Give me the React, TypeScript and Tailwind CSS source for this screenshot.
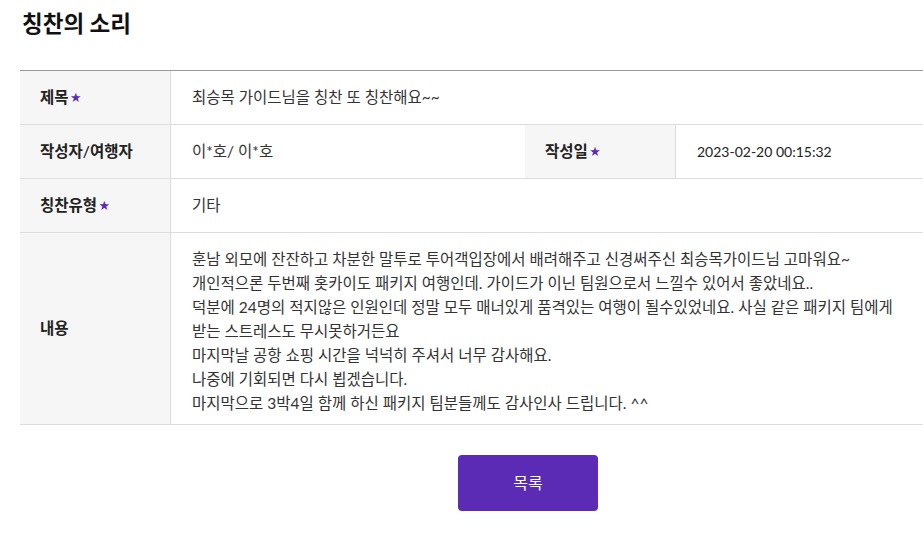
import React from 'react';

const lines = [
  '훈남 외모에 잔잔하고 차분한 말투로 투어객입장에서 배려해주고 신경써주신 최승목가이드님 고마워요~',
  '개인적으론 두번째 홋카이도 패키지 여행인데. 가이드가 이닌 팀원으로서 느낄수 있어서 좋았네요..',
  '덕분에 24명의 적지않은 인원인데 정말 모두 매너있게 품격있는 여행이 될수있었네요. 사실 같은 패키지 팀에게',
  '받는 스트레스도 무시못하거든요',
  '마지막날 공항 쇼핑 시간을 넉넉히 주셔서 너무 감사해요.',
  '나중에 기회되면 다시 뵙겠습니다.',
  '마지막으로 3박4일 함께 하신 패키지 팀분들께도 감사인사 드립니다. ^^',
];

function Label({ children, req }: { children: React.ReactNode; req?: boolean }) {
  return (
    <div className="flex items-center bg-[#f6f6f6] border-r border-[#dddddd] pl-5 text-[15.5px] font-semibold text-[#222]">
      {children}
      {req && <span className="ml-[2px] text-[10.5px] text-[#5b2bb5]">★</span>}
    </div>
  );
}

export default function App() {
  return (
    <div
      className="w-[923px] h-[546px] overflow-hidden bg-white"
      style={{ fontFamily: 'Lato, "Noto Sans CJK KR", sans-serif' }}
    >
      <div className="w-[1016px] ml-5">
        <h1 className="pt-[8px] text-[22.5px] font-bold leading-[32px] text-[#111] pl-[2px]">칭찬의 소리</h1>

        <div className="mt-[30px] border-t border-[#999]">
          <div className="grid grid-cols-[151px_1fr] h-[54px] border-b border-[#dddddd]">
            <Label req>제목</Label>
            <div className="flex items-center pl-[21px] text-[15.5px] text-[#333]">
              최승목 가이드님을 칭찬 또 칭찬해요~~
            </div>
          </div>

          <div className="grid grid-cols-[151px_354px_151px_1fr] h-[54px] border-b border-[#dddddd]">
            <Label>작성자/여행자</Label>
            <div className="flex items-center pl-[21px] text-[15.5px] text-[#333]">이*호/ 이*호</div>
            <Label req>작성일</Label>
            <div className="flex items-center pl-[21px] text-[14px] text-[#222]">
              2023-02-20 00:15:32
            </div>
          </div>

          <div className="grid grid-cols-[151px_1fr] h-[54px] border-b border-[#dddddd]">
            <Label req>칭찬유형</Label>
            <div className="flex items-center pl-[21px] text-[15.5px] text-[#333]">기타</div>
          </div>

          <div className="grid grid-cols-[151px_1fr] border-b border-[#dddddd]">
            <Label>내용</Label>
            <div className="pl-[21px] pt-[14px] pb-[9px] text-[15.5px] leading-[24px] text-[#333] whitespace-nowrap">
              {lines.map((l) => (
                <p key={l}>{l}</p>
              ))}
            </div>
          </div>
        </div>

        <div className="flex justify-center mt-[30px]">
          <button className="w-[140px] h-[56px] rounded-[4px] bg-[#5b2bb5] text-white text-[16px]">
            목록
          </button>
        </div>
      </div>
    </div>
  );
}
